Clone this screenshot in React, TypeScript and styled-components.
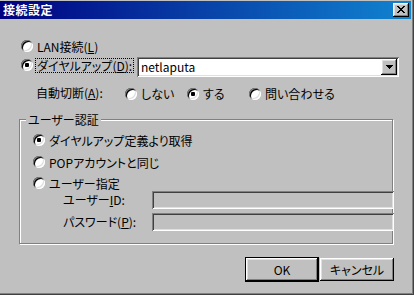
import React from 'react';
import styled, { createGlobalStyle, css } from 'styled-components';

const Global = createGlobalStyle`
  html, body { margin: 0; padding: 0; background: #c0c0c0; }
  body {
    width: 414px; height: 295px; overflow: hidden;
    font-family: "Noto Sans CJK JP", "Liberation Sans", sans-serif;
    font-size: 12px; color: #000;
    font-feature-settings: "palt";
  }
  * { box-sizing: border-box; }
`;

const raised = css`
  box-shadow: inset -1px -1px 0 #000, inset 1px 1px 0 #fff, inset -2px -2px 0 #808080, inset 2px 2px 0 #dfdfdf;
`;
const sunken = css`
  box-shadow: inset 1px 1px 0 #808080, inset -1px -1px 0 #fff, inset 2px 2px 0 #404040, inset -2px -2px 0 #dfdfdf;
`;

const Window = styled.div`
  width: 414px; height: 295px;
  background: #c0c0c0;
  padding: 1px 3px 2px 0;
  box-shadow: inset -1px -1px 0 #404040, inset -2px -2px 0 #808080;
  display: flex; flex-direction: column;
`;

const TitleBar = styled.div`
  height: 18px; flex: none;
  background: linear-gradient(90deg, #000080, #1084d0);
  display: flex; align-items: center; justify-content: space-between;
  padding: 0 2px 0 3px;
`;

const TitleText = styled.span`
  color: #fff; font-weight: bold; font-size: 12px; line-height: 14px; letter-spacing: 0.5px;
`;

const CloseButton = styled.div`
  width: 16px; height: 14px; background: #c0c0c0;
  ${raised};
  display: flex; align-items: center; justify-content: center;
  padding: 0 1px 1px 0;
`;

const Body = styled.div`
  flex: 1; display: flex; flex-direction: column;
`;

const Row = styled.div<{ $top: number; $left: number; $h: number; $align?: string }>`
  display: flex; align-items: ${p => p.$align || 'center'};
  margin-top: ${p => p.$top}px; padding-left: ${p => p.$left}px; height: ${p => p.$h}px;
  white-space: nowrap;
`;

const RadioCircle = styled.span<{ $checked?: boolean; $mt?: number }>`
  flex: none; position: relative;
  width: 12px; height: 12px; border-radius: 50%;
  background: #fff;
  margin-top: ${p => p.$mt || 0}px;
  box-shadow: inset 1px 1px 0 #808080, inset -1px -1px 0 #fff, inset 2px 2px 0 #000, inset -2px -2px 0 #dfdfdf;
  ${p => p.$checked && css`
    &::after {
      content: ''; position: absolute; left: 4px; top: 4px;
      width: 4px; height: 4px; border-radius: 1px; background: #000;
    }
  `}
`;

const Label = styled.span<{ $focus?: boolean; $width?: number; $mt?: number }>`
  margin-left: 2px; margin-top: ${p => p.$mt || 0}px;
  padding: 0 1px; line-height: 13px;
  border: 1px dotted ${p => (p.$focus ? '#000' : 'transparent')};
  ${p => p.$width && css`width: ${p.$width}px;`}
`;

const U = styled.span`text-decoration: underline; text-underline-offset: 1px;`;

const Combo = styled.div`
  margin-left: 3px; width: 262px; height: 20px;
  background: #fff; ${sunken};
  display: flex; align-items: center; justify-content: space-between;
  padding: 2px 2px 2px 4px; line-height: 16px;
`;

const DropButton = styled.div`
  width: 16px; height: 16px; background: #c0c0c0; ${raised};
  display: flex; align-items: center; justify-content: center;
`;

const StaticLabel = styled.span<{ $width: number; $mt?: number }>`
  width: ${p => p.$width}px; line-height: 14px; flex: none;
  margin-top: ${p => p.$mt || 0}px;
`;

const Option = styled.div<{ $width?: number }>`
  display: flex; align-items: center; height: 12px;
  ${p => p.$width && css`width: ${p.$width}px;`}
`;

const OptionText = styled.span`margin-left: 4px; line-height: 12px;`;

const GroupBox = styled.div`
  margin: 17px 0 0 19px; width: 374px; height: 125px;
  border: 1px solid #808080;
  box-shadow: 1px 1px 0 #fff, inset 1px 1px 0 #fff;
  display: flex; flex-direction: column;
`;

const Legend = styled.span`
  align-self: flex-start; margin: -7px 0 0 6px; padding: 0 2px;
  background: #c0c0c0; line-height: 14px; height: 14px;
`;

const Field = styled.div`
  width: 242px; height: 18px; flex: none; background: #c0c0c0; ${sunken};
`;

const ButtonRow = styled.div`
  margin-top: 13px; height: 25px; display: flex; align-items: center;
  justify-content: flex-end; gap: 1px; padding-right: 17px;
`;

const Button = styled.div<{ $default?: boolean }>`
  width: 74px; height: ${p => (p.$default ? 25 : 23)}px;
  background: #c0c0c0; ${raised};
  ${p => p.$default && css`border: 1px solid #000;`}
  display: flex; align-items: center; justify-content: center; line-height: 14px;
`;

const CloseIcon = () => (
  <svg width="8" height="7" viewBox="0 0 8 7" shapeRendering="crispEdges">
    <path d="M0 0h2v1h-2zM6 0h2v1h-2zM1 1h2v1h-2zM5 1h2v1h-2zM2 2h4v1h-4zM3 3h2v1h-2zM2 4h4v1h-4zM1 5h2v1h-2zM5 5h2v1h-2zM0 6h2v1h-2zM6 6h2v1h-2z" fill="#000" />
  </svg>
);

const DownArrow = () => (
  <svg width="7" height="4" viewBox="0 0 7 4" shapeRendering="crispEdges">
    <path d="M0 0h7v1h-7zM1 1h5v1h-5zM2 2h3v1h-3zM3 3h1v1h-1z" fill="#000" />
  </svg>
);

export default function App() {
  return (
    <>
      <Global />
      <Window>
        <TitleBar>
          <TitleText>接続設定</TitleText>
          <CloseButton><CloseIcon /></CloseButton>
        </TitleBar>
        <Body>
          <Row $top={19} $left={21} $h={16}>
            <RadioCircle />
            <Label>LAN接続(<U>L</U>)</Label>
          </Row>
          <Row $top={3} $left={21} $h={20} $align="flex-start">
            <RadioCircle $checked $mt={2} />
            <Label $focus $width={99} $mt={1}>ダイヤルアップ(<U>D</U>):</Label>
            <Combo>
              <span>netlaputa</span>
              <DropButton><DownArrow /></DropButton>
            </Combo>
          </Row>
          <Row $top={9} $left={36} $h={16}>
            <StaticLabel $width={89} $mt={-2}>自動切断(<U>A</U>):</StaticLabel>
            <Option $width={62}><RadioCircle /><OptionText>しない</OptionText></Option>
            <Option $width={62}><RadioCircle $checked /><OptionText>する</OptionText></Option>
            <Option><RadioCircle /><OptionText>問い合わせる</OptionText></Option>
          </Row>
          <GroupBox>
            <Legend>ユーザー認証</Legend>
            <Row $top={5} $left={13} $h={16}>
              <RadioCircle $checked />
              <Label>ダイヤルアップ定義より取得</Label>
            </Row>
            <Row $top={6} $left={13} $h={16}>
              <RadioCircle />
              <Label>POPアカウントと同じ</Label>
            </Row>
            <Row $top={5} $left={13} $h={16}>
              <RadioCircle />
              <Label>ユーザー指定</Label>
            </Row>
            <Row $top={0} $left={43} $h={18}>
              <StaticLabel $width={89}>ユーザー<U>I</U>D:</StaticLabel>
              <Field />
            </Row>
            <Row $top={4} $left={43} $h={18}>
              <StaticLabel $width={89}>パスワード(<U>P</U>):</StaticLabel>
              <Field />
            </Row>
          </GroupBox>
          <ButtonRow>
            <Button $default>OK</Button>
            <Button>キャンセル</Button>
          </ButtonRow>
        </Body>
      </Window>
    </>
  );
}
